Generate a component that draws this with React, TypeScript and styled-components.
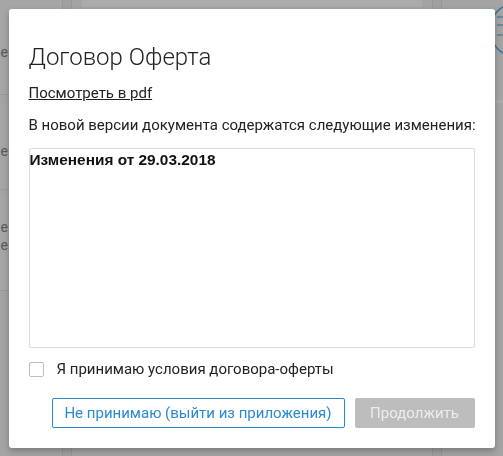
import React from "react";
import styled, { createGlobalStyle } from "styled-components";

const GlobalStyle = createGlobalStyle`
    html, body {
        margin: 0;
        padding: 0;
        width: 503px;
        height: 456px;
        overflow: hidden;
        font-family: Roboto, "Noto Sans", sans-serif;
    }
`;

// the dimmed application page behind the dialog
const Page = styled.div`
    width: 503px;
    height: 456px;
    background: #a4a4a4;
    display: grid;
    grid-template-columns: 62px 10px 1fr 10px 61px;
    grid-template-rows: 100%;
`;

const SideColumn = styled.div`
    display: flex;
    flex-direction: column;
`;

const SideCard = styled.div<{ $h: number; $top: number; $gap?: number }>`
    height: ${(p) => p.$h}px;
    margin-bottom: ${(p) => p.$gap ?? 0}px;
    background: #a6a6a6;
    border-bottom: 1px solid #9a9a9a;
    color: #5a5a5a;
    font-size: 14px;
    line-height: 18px;
    padding-top: ${(p) => p.$top}px;
    box-sizing: border-box;
    text-align: right;
    padding-right: 54px;
`;

const Gutter = styled.div`
    background: #a0a0a0;
    border-left: 1px solid #989898;
    border-right: 1px solid #989898;
`;

const Middle = styled.div`
    padding: 0 10px;
`;

const MiddleBar = styled.div`
    height: 7px;
    background: #ababab;
`;

const RightColumn = styled.div`
    display: flex;
    flex-direction: column;
`;

const RightHead = styled.div`
    height: 100px;
    border-bottom: 3px solid #acacac;
    display: flex;
    align-items: center;
    justify-content: flex-end;
`;

const Overlay = styled.div`
    position: fixed;
    inset: 0;
    display: flex;
    align-items: flex-start;
    justify-content: center;
    padding-top: 9px;
`;

const Dialog = styled.div`
    width: 486px;
    height: 439px;
    box-sizing: border-box;
    background: #fff;
    border-radius: 3px;
    box-shadow: 0 3px 6px rgba(0, 0, 0, 0.25);
    padding: 33px 20px 0 20px;
    display: flex;
    flex-direction: column;
    color: #222;
`;

const Title = styled.h2`
    margin: 0;
    font-weight: 300;
    font-size: 24px;
    line-height: 30px;
    color: #222;
`;

const PdfLink = styled.a`
    margin-top: 12px;
    font-size: 15px;
    line-height: 18px;
    color: #222;
    text-decoration: underline;
    align-self: flex-start;
`;

const Lead = styled.p`
    margin: 14px 0 0;
    font-size: 15px;
    line-height: 18px;
    color: #222;
    white-space: nowrap;
`;

const ChangesBox = styled.div`
    margin-top: 14px;
    height: 200px;
    box-sizing: border-box;
    border: 1px solid #dcdcdc;
    border-radius: 2px;
    padding: 2px 0;
`;

const ChangesTitle = styled.div`
    font-family: "Liberation Sans", Arial, sans-serif;
    font-weight: bold;
    font-size: 15.4px;
    line-height: 17px;
    color: #111;
`;

const AcceptRow = styled.label`
    margin-top: 12px;
    display: flex;
    align-items: center;
    gap: 13px;
    font-size: 15px;
    line-height: 18px;
    color: #222;
`;

const Box = styled.span`
    width: 15px;
    height: 15px;
    box-sizing: border-box;
    border: 1px solid #bdbdbd;
    border-radius: 2px;
    background: #fff;
`;

const Actions = styled.div`
    margin-top: 20px;
    display: flex;
    justify-content: flex-end;
    gap: 10px;
`;

const Button = styled.button<{ $variant: "outline" | "disabled" }>`
    height: 30px;
    box-sizing: border-box;
    font-family: Roboto, sans-serif;
    font-size: 15px;
    border-radius: 2px;
    padding: 0;
    white-space: nowrap;
    ${(p) =>
        p.$variant === "outline"
            ? `
        background: #fff;
        color: #2a8ad0;
        border: 1px solid #2a8ad0;
        width: 293px;
    `
            : `
        background: #bdbdbd;
        color: #ededed;
        border: 1px solid #bdbdbd;
        width: 120px;
    `}
`;

const Ring = () => (
    <svg width="14" height="50" viewBox="0 0 14 50" style={{ marginTop: -40 }}>
        <path d="M14 2 A24 24 0 0 0 2 25 A24 24 0 0 0 14 48" fill="none" stroke="#2f6f96" strokeWidth="1.5" />
        <path d="M8 12 H14 M8 20 H14 M8 30 H14" stroke="#2f6f96" strokeWidth="1.2" />
    </svg>
);

export default function App() {
    return (
        <>
            <GlobalStyle />
            <Page>
                <SideColumn>
                    <SideCard $h={95} $top={43} $gap={8}>е</SideCard>
                    <SideCard $h={87} $top={39} $gap={7}>е</SideCard>
                    <SideCard $h={94} $top={21}>
                        е<br />е
                    </SideCard>
                </SideColumn>
                <Gutter />
                <Middle>
                    <MiddleBar />
                </Middle>
                <Gutter />
                <RightColumn>
                    <RightHead>
                        <Ring />
                    </RightHead>
                </RightColumn>
            </Page>
            <Overlay>
                <Dialog>
                    <Title>Договор Оферта</Title>
                    <PdfLink href="#">Посмотреть в pdf</PdfLink>
                    <Lead>В новой версии документа содержатся следующие изменения:</Lead>
                    <ChangesBox>
                        <ChangesTitle>Изменения от 29.03.2018</ChangesTitle>
                    </ChangesBox>
                    <AcceptRow>
                        <Box />
                        Я принимаю условия договора-оферты
                    </AcceptRow>
                    <Actions>
                        <Button $variant="outline">Не принимаю (выйти из приложения)</Button>
                        <Button $variant="disabled">Продолжить</Button>
                    </Actions>
                </Dialog>
            </Overlay>
        </>
    );
}
